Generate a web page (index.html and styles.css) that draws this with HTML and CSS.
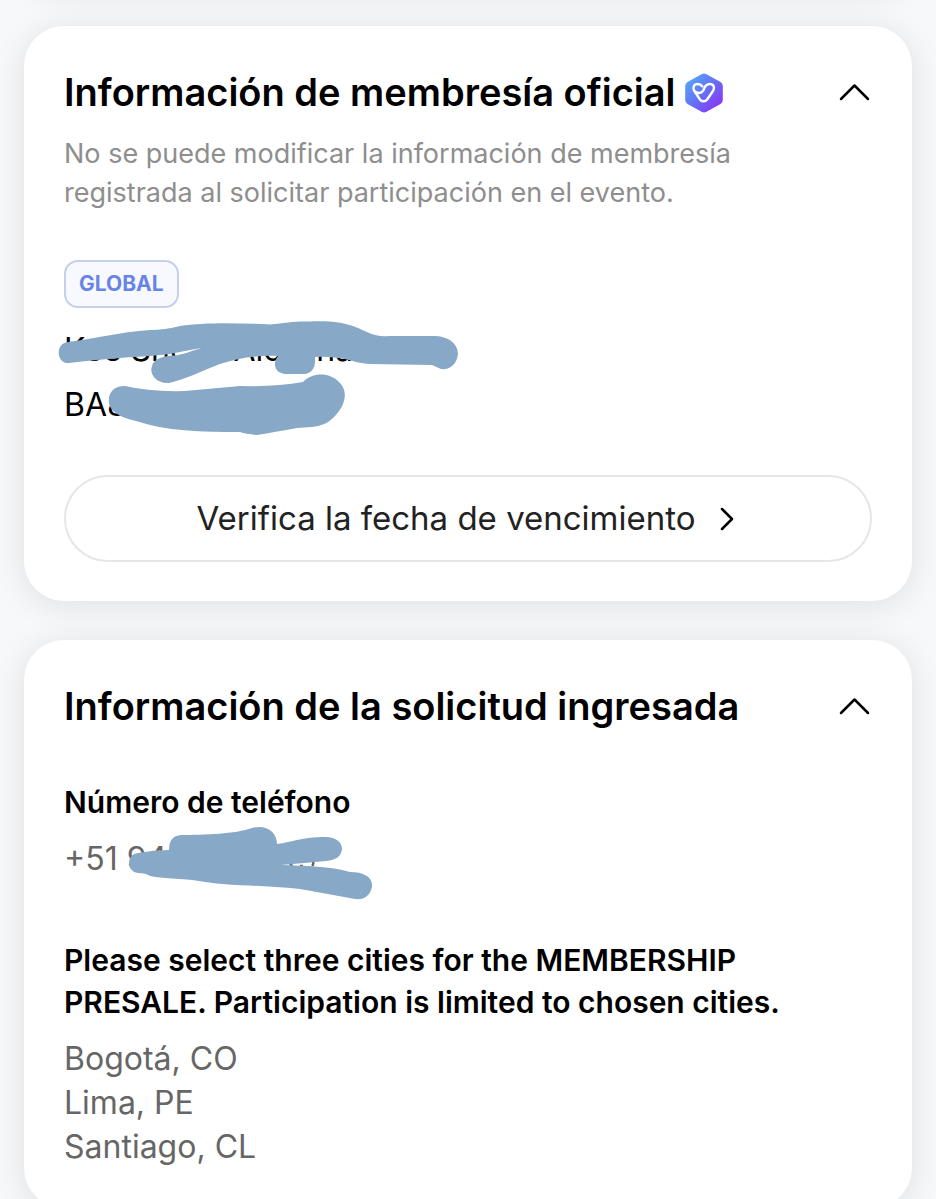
FILE: index.html
```html
<!DOCTYPE html>
<html lang="es">
<head>
<meta charset="utf-8">
<meta name="viewport" content="width=device-width, initial-scale=1">
<title>Información de la solicitud</title>
<link rel="stylesheet" href="styles.css">
</head>
<body>
<main class="page">
  <div class="card card-previous"></div>

  <section class="card">
    <header class="card-header">
      <h2 class="card-title">Información de membresía oficial
        <svg class="badge-icon" viewBox="0 0 38 40" aria-hidden="true">
          <defs><linearGradient id="hex" x1="0" y1="0" x2="1" y2="1"><stop offset="0.1" stop-color="#55a5fb"/><stop offset="0.5" stop-color="#6670f5"/><stop offset="0.9" stop-color="#8c34f4"/></linearGradient></defs>
          <path fill="url(#hex)" d="M16.5 1.2q2.5-1.400 5 0l14 7.800q2.300 1.300 2.300 4v14q0 2.700-2.300 4l-14 7.800q-2.500 1.400-5 0l-14-7.800q-2.300-1.300-2.300-4v-14q0-2.700 2.300-4z"/>
          <path fill="none" stroke="#fff" stroke-width="2.400" stroke-linecap="round" stroke-linejoin="round" d="M17.300 13.300C16 11.500 14.300 11 12.500 11C9 11 7.500 14.500 9 17.500L14.700 26.200C16.800 29 20.200 29 22.300 26.200L28.300 17.500C30 14.500 28.500 11 25 11C22 11 20.500 12.500 19.500 14.800C18.500 17.800 17 19.800 14 20C12 20 10.300 19.500 9 17.500"/>
        </svg>
      </h2>
      <button class="toggle" type="button" aria-label="Contraer membresía" aria-expanded="true">
        <svg viewBox="0 0 32 18" aria-hidden="true"><path d="M3 16L16.500 2.500L30 16"/></svg>
      </button>
    </header>
    <p class="note">No se puede modificar la información de membresía registrada al solicitar participación en el evento.</p>
    <span class="region">GLOBAL</span>
    <div class="masked member">
      <p>Kee Snc. &nbsp;&nbsp;&nbsp;Alc &nbsp;&nbsp;ina</p>
      <p>BA8</p>
      <svg class="mask member-mask" viewBox="54 316 410 124" aria-hidden="true">
        <path d="M69 363C56 364 55 343 68 342C92 339 120 332 150 330Q165 330 180 326C205 322 240 323 270 324.500C285 323 295 321 310 321.500C345 320 355 327 367 332Q376 337 390 336H433C449 336 458 344 458 354C457 365 449 370 441 369L432 365L370 364Q358 363 353 361Q333 356 315 357C316 369 311 373 305 374H285C275 373 272 364 278 356C258 355 238 358 220 364C204 370 184 380 169 383C156 384 149 374 152 366C153 360 161 356 174 355.500C182 355 192 351 201 348Q184 351 170 354L150 356C130 357 105 359 69 363Z"/>
        <path d="M109 403C108 393 113 386 125 386Q150 392 185 391L240 386Q275 387 303 382C312 372 330 372 339 382C350 392 344 408 333 418Q325 426 312 427L297 428Q275 432 257 435Q246 434 240 432C202 432 165 431 136 421C119 417 110 411 109 403Z"/>
      </svg>
    </div>
    <button class="verify" type="button">Verifica la fecha de vencimiento
      <svg viewBox="0 0 14 24" aria-hidden="true"><path d="M2 2L12 12L2 22"/></svg>
    </button>
  </section>

  <section class="card">
    <header class="card-header">
      <h2 class="card-title">Información de la solicitud ingresada</h2>
      <button class="toggle" type="button" aria-label="Contraer solicitud" aria-expanded="true">
        <svg viewBox="0 0 32 18" aria-hidden="true"><path d="M3 16L16.500 2.500L30 16"/></svg>
      </button>
    </header>
    <h3 class="label label-phone">Número de teléfono</h3>
    <div class="masked answer">
      <p>+51 94</p>
      <svg class="mask phone-mask" viewBox="124 822 254 82" aria-hidden="true">
        <path fill="none" stroke="#666" stroke-width="2.500" d="M290 863l2 3m8 0h3m10-5q1 3-1 5"/>
        <path d="M138 873C126 872 126 854 138 853Q154 850 169 850C169 840 173 836 181 835C205 835 235 834 252 828C266 824 277 832 277 844C293 842 302 837 325 837C337 837 342 843 342 849C341 857 336 860 326 861Q305 863 281 865C306 866 330 866 350 872C364 872 373 877 372 887C370 896 364 900 355 899Q328 894 300 889C260 885 230 886 205 882C185 878 165 879 150 876Q146 873 138 873Z"/>
      </svg>
    </div>
    <h3 class="label label-cities">Please select three cities for the MEMBERSHIP PRESALE. Participation is limited to chosen cities.</h3>
    <div class="answer cities">
      <p>Bogotá, CO</p>
      <p>Lima, PE</p>
      <p>Santiago, CL</p>
    </div>
  </section>
</main>
</body>
</html>
```

FILE: styles.css
```css
* { box-sizing: border-box; }
body { margin: 0; background: #f7f8fa; color: #000; font-family: Inter, "Liberation Sans", sans-serif; }
h2, h3, p { margin: 0; }
button { font: inherit; cursor: pointer; }
.page { display: flex; flex-direction: column; gap: 39px; height: 100vh; padding: 0 24px; overflow-y: auto; scrollbar-width: none; }
.card { flex: none; padding: 40px 40px 39px; border-radius: 40px; background: #fff; box-shadow: 0 4px 32px rgba(0, 0, 0, 0.1); }
.card-previous { margin-top: -92px; }
.card-header { display: flex; align-items: center; justify-content: space-between; gap: 16px; }
.card-title { font-size: 38px; line-height: 52px; font-weight: 600; }
.badge-icon { width: 38px; height: 40px; vertical-align: -7px; }
.toggle { flex: none; display: flex; padding: 8px 2px; border: 0; background: none; }
.toggle svg { width: 32px; height: 18px; }
.toggle path, .verify path { fill: none; stroke: #000; stroke-width: 2.5; stroke-linecap: round; stroke-linejoin: round; }
.note { margin-top: 16px; padding-right: 80px; color: #8e8e8e; font-size: 27px; line-height: 39px; }
.region { display: block; width: fit-content; margin-top: 48px; padding: 9px 13px; border: 2px solid #c4d0ea; border-radius: 14px; background: #f8f9ff; color: #6785e6; font-size: 21px; line-height: 26px; font-weight: 700; }
.masked { position: relative; width: fit-content; }
.member { margin-top: 14px; font-size: 32px; line-height: 55px; }
.mask { position: absolute; fill: #88a8c8; }
.member-mask { left: -10px; top: -6px; width: 410px; height: 124px; }
.phone-mask { left: 60px; top: -15px; width: 254px; height: 82px; }
.verify { display: flex; align-items: center; justify-content: center; gap: 24px; width: 100%; margin-top: 43px; padding: 19px 26px 19px 20px; border: 2px solid #e6e6e6; border-radius: 44px; background: #fff; color: #222; font-size: 33px; line-height: 45px; }
.verify svg { width: 14px; height: 24px; }
.label { font-size: 30px; line-height: 42px; font-weight: 600; }
.label-phone { margin-top: 49px; }
.answer { color: #666; font-size: 32px; line-height: 44px; }
.label + .masked { margin-top: 14px; }
.label-cities { margin-top: 58px; }
.cities { margin-top: 14px; }
```
